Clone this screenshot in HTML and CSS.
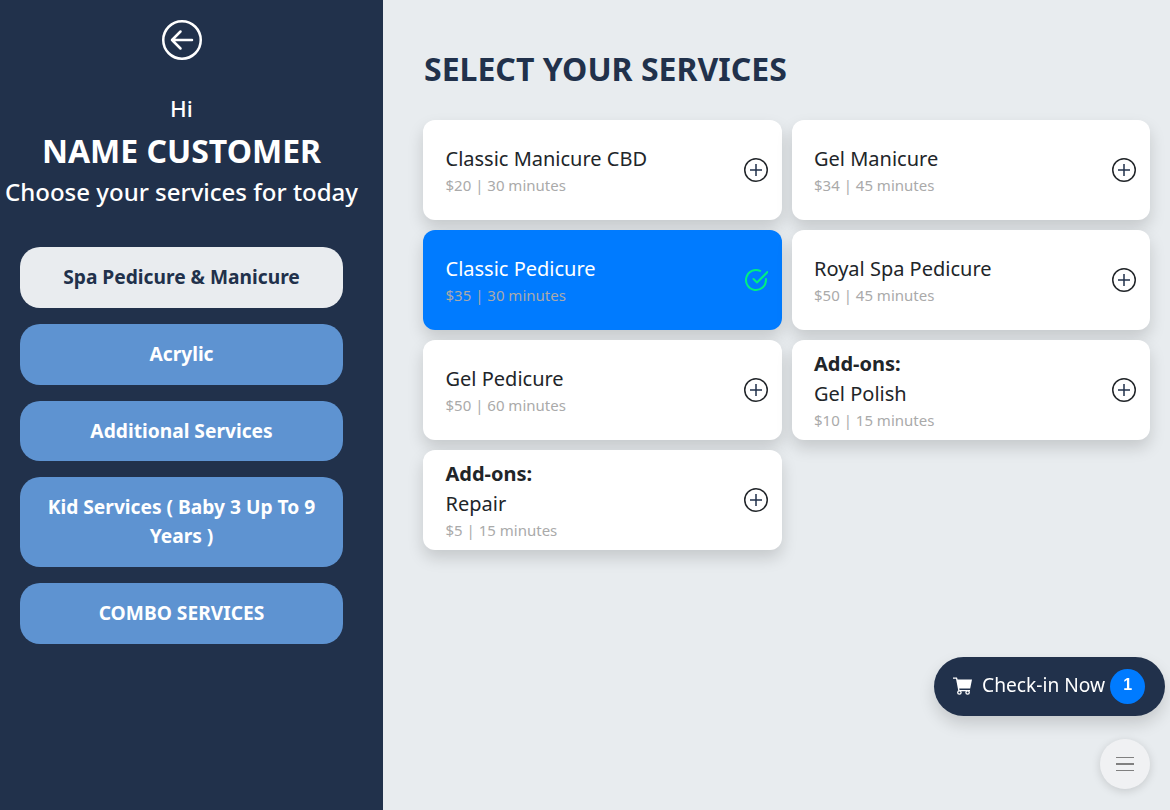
FILE: index.html
```html
<!DOCTYPE html>
<html lang="en">
<head>
    <meta charset="UTF-8">
    <meta name="viewport" content="width=device-width, initial-scale=1.0">
    <title>Select Your Services</title>
    <link rel="stylesheet" href="styles.css">
</head>
<body>
    <div class="page">
        <aside class="sidebar">
            <button class="back-btn" aria-label="Back">
                <svg width="40" height="40" viewBox="0 0 40 40" fill="none" stroke="#fff">
                    <circle cx="20" cy="20" r="18.75" stroke-width="2.5"/>
                    <path d="M30 20H10M18.5 11.5L10 20l8.5 8.5" stroke-width="2.5" stroke-linecap="round" stroke-linejoin="round"/>
                </svg>
            </button>
            <div class="greeting">
                <div class="hi">Hi</div>
                <div class="customer">NAME CUSTOMER</div>
                <div class="choose">Choose your services for today</div>
            </div>
            <nav class="categories">
                <a class="category active">Spa Pedicure &amp; Manicure</a>
                <a class="category">Acrylic</a>
                <a class="category">Additional Services</a>
                <a class="category">Kid Services ( Baby 3 Up To 9 Years )</a>
                <a class="category">COMBO SERVICES</a>
            </nav>
        </aside>

        <main class="content">
            <h1>SELECT YOUR SERVICES</h1>
            <div class="services">
                <div class="service">
                    <div class="info">
                        <div class="name">Classic Manicure CBD</div>
                        <div class="meta">$20 | 30 minutes</div>
                    </div>
                    <svg class="icon" viewBox="0 0 24 24"><circle cx="12" cy="12" r="11.25"/><path d="M12 6v12M6 12h12" class="plus"/></svg>
                </div>
                <div class="service">
                    <div class="info">
                        <div class="name">Gel Manicure</div>
                        <div class="meta">$34 | 45 minutes</div>
                    </div>
                    <svg class="icon" viewBox="0 0 24 24"><circle cx="12" cy="12" r="11.25"/><path d="M12 6v12M6 12h12" class="plus"/></svg>
                </div>
                <div class="service selected">
                    <div class="info">
                        <div class="name">Classic Pedicure</div>
                        <div class="meta">$35 | 30 minutes</div>
                    </div>
                    <svg class="check" viewBox="0 0 24 24"><path d="M22 11v1a10 10 0 1 1-5.9-9.1"/><path d="M23.5 4L13 14.5l-3.5-3.5"/></svg>
                </div>
                <div class="service">
                    <div class="info">
                        <div class="name">Royal Spa Pedicure</div>
                        <div class="meta">$50 | 45 minutes</div>
                    </div>
                    <svg class="icon" viewBox="0 0 24 24"><circle cx="12" cy="12" r="11.25"/><path d="M12 6v12M6 12h12" class="plus"/></svg>
                </div>
                <div class="service">
                    <div class="info">
                        <div class="name">Gel Pedicure</div>
                        <div class="meta">$50 | 60 minutes</div>
                    </div>
                    <svg class="icon" viewBox="0 0 24 24"><circle cx="12" cy="12" r="11.25"/><path d="M12 6v12M6 12h12" class="plus"/></svg>
                </div>
                <div class="service">
                    <div class="info">
                        <div class="addon">Add-ons:</div>
                        <div class="name">Gel Polish</div>
                        <div class="meta">$10 | 15 minutes</div>
                    </div>
                    <svg class="icon" viewBox="0 0 24 24"><circle cx="12" cy="12" r="11.25"/><path d="M12 6v12M6 12h12" class="plus"/></svg>
                </div>
                <div class="service">
                    <div class="info">
                        <div class="addon">Add-ons:</div>
                        <div class="name">Repair</div>
                        <div class="meta">$5 | 15 minutes</div>
                    </div>
                    <svg class="icon" viewBox="0 0 24 24"><circle cx="12" cy="12" r="11.25"/><path d="M12 6v12M6 12h12" class="plus"/></svg>
                </div>
            </div>
        </main>
    </div>

    <button class="checkin">
        <svg class="cart" viewBox="0 0 20 20">
            <path fill="#fff" d="M0 .5h4l.6 2H19l-1.8 9H6.2l.3 1.5h10.5v1.3H5.4L3 1.8H0z"/>
            <circle cx="6.4" cy="15.5" r="1.7" fill="#21314b" stroke="#fff" stroke-width="1.3"/>
            <circle cx="14.6" cy="15.5" r="1.7" fill="#21314b" stroke="#fff" stroke-width="1.3"/>
        </svg>
        <span class="checkin-text">Check-in Now</span>
        <span class="count">1</span>
    </button>
    <button class="menu-btn" aria-label="Menu">
        <svg width="18" height="16" viewBox="0 0 18 16" stroke="#808080">
            <path d="M0 1.5h18M0 14.5h18" stroke-width="1.2"/>
            <path d="M0 8h18" stroke-width="2"/>
        </svg>
    </button>
</body>
</html>
```

FILE: styles.css
```css
* {
    box-sizing: border-box;
}

body {
    margin: 0;
    font-family: "Noto Sans", sans-serif;
    background: #e8ecef;
    color: #212529;
}

button {
    font-family: inherit;
    border: none;
    padding: 0;
    cursor: pointer;
}

.page {
    display: flex;
    height: 810px;
    overflow: hidden;
}

.sidebar {
    width: 383px;
    flex-shrink: 0;
    background: #21314b;
    padding: 20px 40px 0 20px;
    display: flex;
    flex-direction: column;
    align-items: center;
}

.back-btn {
    width: 40px;
    height: 40px;
    background: none;
    display: block;
}

.greeting {
    width: 100%;
    margin-top: 30px;
    color: #fff;
    text-align: center;
    white-space: nowrap;
    display: flex;
    flex-direction: column;
    align-items: center;
}

.hi {
    font-size: 22.4px;
    font-weight: 500;
    line-height: 37px;
}

.customer {
    font-size: 32px;
    font-weight: 700;
    line-height: 48px;
}

.choose {
    font-size: 24px;
    font-weight: 500;
    line-height: 34px;
}

.categories {
    width: 100%;
    margin-top: 38px;
    display: flex;
    flex-direction: column;
    gap: 16px;
}

.category {
    display: block;
    padding: 16px 20px;
    border-radius: 20px;
    background: #5e93d1;
    color: #fff;
    font-size: 19.2px;
    font-weight: 700;
    line-height: 1.5;
    text-align: center;
}

.category.active {
    background: #e9ecef;
    color: #21314b;
}

.content {
    flex: 1;
    padding: 46px 20px 0 40px;
}

h1 {
    margin: 0 0 29px 1px;
    font-size: 32px;
    font-weight: 700;
    line-height: 45px;
    color: #21314b;
}

.services {
    display: grid;
    grid-template-columns: 1fr 1fr;
    grid-auto-rows: 100px;
    gap: 10px;
}

.service {
    display: flex;
    align-items: center;
    justify-content: space-between;
    padding: 0 14px 0 22.5px;
    background: #fff;
    border-radius: 12px;
    box-shadow: 0 8px 16px rgba(0, 0, 0, 0.15);
}

.service.selected {
    background: #007bff;
    color: #fff;
}

.name {
    font-size: 20px;
    line-height: 30px;
}

.addon {
    font-size: 20px;
    font-weight: 700;
    line-height: 30px;
}

.meta {
    font-size: 15px;
    line-height: 22px;
    color: #aaa;
}

.icon {
    width: 24px;
    height: 24px;
    flex-shrink: 0;
    fill: none;
    stroke: #212529;
    stroke-width: 1.5;
}

.plus {
    stroke: #21314b;
}

.check {
    width: 24px;
    height: 24px;
    flex-shrink: 0;
    fill: none;
    stroke: #00f080;
    stroke-width: 2;
    stroke-linecap: round;
    stroke-linejoin: round;
}

.checkin {
    position: fixed;
    left: 934px;
    top: 657px;
    width: 231px;
    height: 59px;
    padding: 0 19px;
    display: flex;
    align-items: center;
    border-radius: 30px;
    background: #21314b;
    color: #fff;
    font-size: 19.2px;
    white-space: nowrap;
    box-shadow: 0 8px 16px rgba(0, 0, 0, 0.15);
}

.checkin-text {
    padding-bottom: 4px;
}

.cart {
    width: 20px;
    height: 20px;
    margin-right: 9px;
    flex-shrink: 0;
}

.count {
    width: 35px;
    height: 35px;
    margin-left: 5px;
    padding-bottom: 3px;
    flex-shrink: 0;
    display: flex;
    align-items: center;
    justify-content: center;
    border-radius: 50%;
    background: #007bff;
    font-family: "Liberation Sans", sans-serif;
    font-size: 16px;
    font-weight: 700;
}

.menu-btn {
    position: fixed;
    left: 1100px;
    top: 739px;
    width: 50px;
    height: 50px;
    display: flex;
    align-items: center;
    justify-content: center;
    border-radius: 50%;
    background: #f0f1f3;
    box-shadow: 0 2px 10px rgba(0, 0, 0, 0.15);
}
```
